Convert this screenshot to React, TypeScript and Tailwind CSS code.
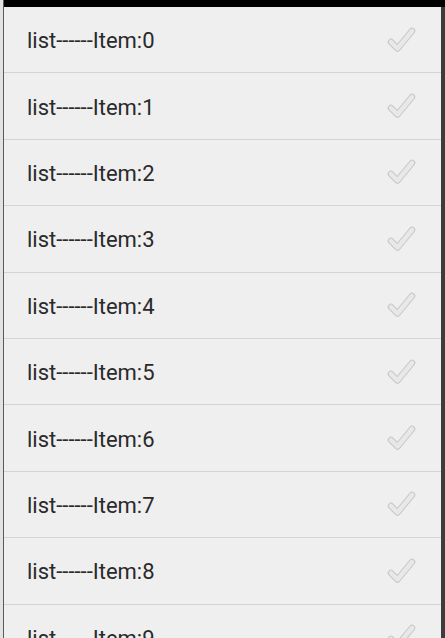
import React from "react";

function Check() {
  return (
    <svg width="32" height="32" viewBox="0 0 32 32" className="shrink-0">
      <path d="M6 18 L12.5 24.5 L27 7" fill="none" stroke="#c6c6c6" strokeWidth="6.5" strokeLinecap="round" strokeLinejoin="round" />
      <path d="M6 18 L12.5 24.5 L27 7" fill="none" stroke="#e8e8e8" strokeWidth="4.5" strokeLinecap="round" strokeLinejoin="round" />
    </svg>
  );
}

export default function App() {
  const items = Array.from({ length: 10 }, (_, i) => i);
  return (
    <div className="w-[445px] h-[638px] overflow-hidden flex bg-[#e4e4e4]" style={{ fontFamily: "Roboto, 'Liberation Sans', sans-serif" }}>
      <div className="w-[3px] h-full bg-[#e2e2e2]" />
      <div className="w-[1px] h-full bg-[#5a5a5a]" />
      <div className="flex-1 flex flex-col">
        <div className="h-[7px] bg-black shrink-0" />
        <div className="flex-1 bg-[#efefef] flex flex-col overflow-hidden">
          {items.map((i) => (
            <div key={i} className="h-[66.4px] shrink-0 border-b border-[#d4d4d4] flex items-center justify-between pl-[23px] pr-[24px]">
              <span className="text-[22px] font-normal text-[#2a2a2a] pt-[3px] leading-none">list------Item:{i}</span>
              <Check />
            </div>
          ))}
        </div>
      </div>
      <div className="w-[4px] h-full flex flex-col">
        <div className="h-[7px] bg-black" />
        <div className="flex-1 bg-[#3c3c3c]" />
      </div>
    </div>
  );
}
